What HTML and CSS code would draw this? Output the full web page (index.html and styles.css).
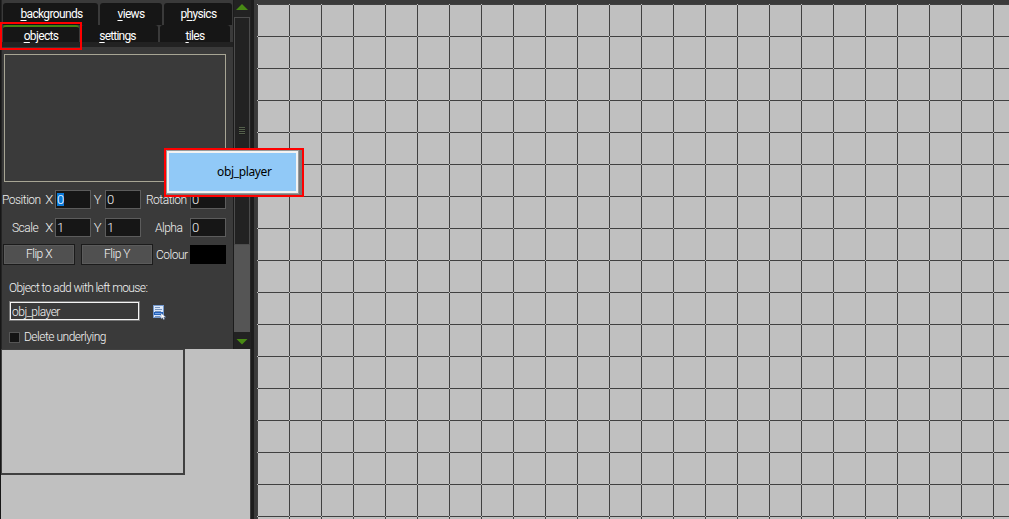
FILE: index.html
```
<!DOCTYPE html>
<html lang="en">
<head>
<meta charset="utf-8">
<title>Room editor</title>
<link rel="stylesheet" href="styles.css">
</head>
<body>
<main class="editor">
  <aside class="sidebar">
    <div class="controls">
      <section class="panel">
        <nav class="tabs">
          <div class="tab-row first">
            <div class="tab"><span><u>b</u>ackgrounds</span></div>
            <div class="tab"><span><u>v</u>iews</span></div>
            <div class="tab"><span>p<u>h</u>ysics</span></div>
          </div>
          <div class="tab-row second">
            <div class="tab active"><span><u>o</u>bjects</span></div>
            <div class="tab"><span><u>s</u>ettings</span></div>
            <div class="tab"><span><u>t</u>iles</span></div>
          </div>
        </nav>
        <div class="preview"></div>
        <div class="props">
          <span class="label position">Position</span><span class="label axis">X</span><span class="field"><mark>0</mark></span>
          <span class="label axis">Y</span><span class="field">0</span><span class="label rotation">Rotation</span><span class="field">0</span>
          <span class="label scale">Scale</span><span class="label axis">X</span><span class="field">1</span>
          <span class="label axis">Y</span><span class="field">1</span><span class="label alpha">Alpha</span><span class="field">0</span>
        </div>
        <div class="actions">
          <div class="button">Flip X</div>
          <div class="button">Flip Y</div>
          <span class="label colour">Colour</span>
          <div class="swatch"></div>
        </div>
        <div class="caption">Object to add with left mouse:</div>
        <div class="picker">
          <div class="object-name">obj_player</div>
          <svg class="menu-icon" width="14" height="15" viewBox="0 0 14 15">
            <rect x=".5" y=".5" width="10" height="12" fill="#dce8fa" stroke="#7398cd"/>
            <path d="M2 2.500h5M2 4.500h7M2 6.500h6M2 11.500h5" stroke="#7593bd"/>
            <path d="M1 7h9v3H1z" fill="#2462bc"/>
            <path d="M2 8.500h6" stroke="#73a4e8"/>
            <path d="M8 8v6l1.500-1.300 1 2 1.200-.6-1-1.800H13z" fill="#fff" stroke="#3f5e91" stroke-width=".4"/>
          </svg>
        </div>
        <div class="check"><span class="box"></span><span class="delete">Delete underlying</span></div>
      </section>
      <div class="scrollbar">
        <svg class="arrow" width="16" height="17" viewBox="0 0 16 17"><path d="M2 10L8 4l6 6z" fill="#488a14"/></svg>
        <div class="thumb"><span class="grip"></span></div>
        <div class="trough"></div>
        <svg class="arrow" width="16" height="17" viewBox="0 0 16 17"><path d="M2.500 7h11L8 12.500z" fill="#488a14"/></svg>
      </div>
    </div>
    <div class="overview"><div class="room-view"></div></div>
  </aside>
  <div class="splitter"></div>
  <section class="room">
    <svg class="room-grid" width="752" height="515">
      <defs>
        <pattern id="cell" width="32" height="32" patternUnits="userSpaceOnUse">
          <rect width="32" height="32" fill="#c0c0c0"/>
          <path d="M0 0h32v1H0zM0 0h1v32H0z" fill="#404040"/>
          <rect width="1" height="1" fill="#c0c0c0"/>
        </pattern>
      </defs>
      <rect width="752" height="515" fill="url(#cell)"/>
    </svg>
  </section>
  <div class="tab-highlight"></div>
  <div class="popup"><div class="popup-frame"><div class="option"><span>obj_player</span></div></div></div>
</main>
</body>
</html>
```
FILE: styles.css
```
* { box-sizing: border-box; }
body { margin: 0; background: #3a3a3a; font: 300 12px/14px Roboto, "Liberation Sans", sans-serif; letter-spacing: -.5px; color: #f4f4f4; }
.editor { position: relative; display: flex; width: 1009px; height: 519px; overflow: hidden; white-space: nowrap; }
.sidebar { width: 251px; border-left: 1px solid #161616; }
.controls { display: flex; height: 349px; }
.panel { width: 232px; padding: 3px 0 0 1px; background: #3a3a3a; border-left: 1px solid #242424; }
.tabs { margin-left: -1px; height: 44px; background: #3a3a3a; border-bottom: 5px solid #222; }
.tab-row { display: flex; padding-left: 1px; }
.first { height: 22px; gap: 2px; }
.second { height: 17px; gap: 2px; }
.tab { display: flex; justify-content: center; height: 100%; padding-top: 4px; background: #161616; border-radius: 3px 3px 0 0; color: #fff; font-weight: 400; letter-spacing: -.65px; }
.tab u { text-underline-offset: 2px; }
.first .tab:nth-child(1) { width: 95px; padding-left: 2px; }
.first .tab:nth-child(2) { width: 62px; }
.first .tab:nth-child(3) { width: 68px; padding-left: 1px; }
.second .tab:nth-child(1) { width: 76px; }
.second .tab:nth-child(2) { width: 77px; letter-spacing: -.8px; padding-right: 4px; }
.second .tab:nth-child(3) { width: 70px; }
.second .active { border-top: 2px solid #438611; padding-top: 2px; }
.preview { margin: 7px 0 0 1px; width: 222px; height: 128px; border: 1px solid #a7a594; }
.props { display: grid; grid-template-columns: 41px 11px 36px 14px 36px 49px 36px; grid-template-rows: 19px 19px; row-gap: 9px; margin-top: 8px; align-items: center; }
.field { height: 19px; padding: 2px 0 0 1px; border: 1px solid #5c5c5c; background: #161616; font-size: 13px; }
.field mark { display: inline-block; width: 7px; height: 13px; line-height: 13px; background: #0a78d7; color: #fff; }
.label { color: #f0f0f0; }
.axis { text-align: center; font-size: 13px; padding-right: 1px; }
.position { margin-left: -1px; }
.scale { padding-left: 9px; }
.rotation { padding-left: 5px; }
.alpha { padding-left: 14px; }
.actions { display: flex; align-items: center; margin-top: 7px; height: 21px; }
.button { width: 72px; height: 21px; margin-right: 6px; border: 1px solid #1b1b1b; background: #505050; box-shadow: inset 0 0 0 1px #5b5b5b; text-align: center; line-height: 19px; }
.colour { width: 31px; margin-left: -3px; }
.swatch { width: 36px; height: 19px; margin-left: 3px; background: #000; }
.caption { margin: 16px 0 0 6px; height: 20px; letter-spacing: -.6px; }
.picker { display: flex; margin-left: 6px; height: 20px; }
.object-name { width: 131px; height: 20px; border: 1px solid #777; outline: 1px solid #f4f4f4; outline-offset: -2px; padding: 3px 0 0 2px; }
.menu-icon { margin: 4px 0 0 13px; }
.check { display: flex; align-items: center; margin: 9px 0 0 6px; gap: 4px; height: 14px; }
.box { width: 11px; height: 11px; border: 1px solid #555; background: #141414; }
.scrollbar { width: 18px; border-left: 1px solid #1c1c1c; background: #222; }
.arrow { display: block; height: 17px; }
.thumb { display: flex; justify-content: center; align-items: center; height: 228px; margin-right: 1px; border: 1px solid #4c4c4c; background: #222; }
.grip { width: 6px; height: 8px; background: repeating-linear-gradient(#55604c 0 1px, #1c1c1c 1px 2px); }
.trough { height: 87px; margin-right: 1px; background: #555; }
.overview { height: 170px; margin-right: 1px; background: #c0c0c0; }
.room-view { width: 184px; height: 126px; border: 1px solid #404040; border-right-width: 2px; border-bottom-width: 2px; }
.splitter { width: 6px; border-left: 3px solid #1c1c1c; background: #3a3a3a; }
.room { width: 752px; padding-top: 4px; background: #3a3a3a; }
.room-grid { display: block; }
.tab-highlight { position: absolute; left: 0; top: 22px; width: 82px; height: 28px; border: 2px solid #f00; }
.popup { position: absolute; left: 164px; top: 148px; width: 140px; height: 49px; padding: 1px 4px 2px 1px; border: 2px solid #f00; background: #777; }
.popup-frame { height: 42px; border: 2px solid #f2f2f2; outline: 1px solid #999; }
.option { height: 38px; padding: 11px 0 0 48px; background: #91c9f7; color: #000; font: 400 12px/15px "Noto Sans", sans-serif; letter-spacing: -.35px; }
```
